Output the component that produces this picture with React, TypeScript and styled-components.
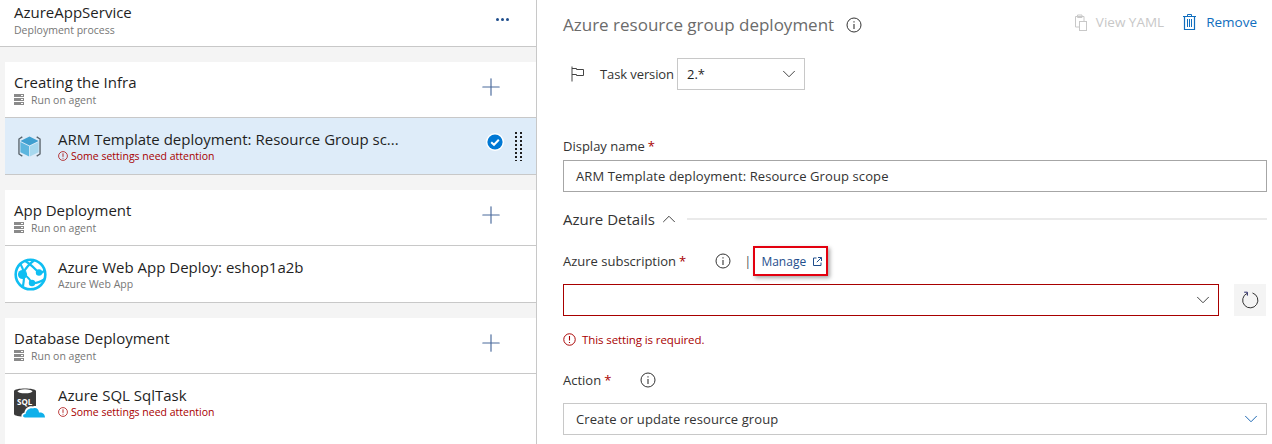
import styled, { createGlobalStyle } from 'styled-components';
import { ChevronDown, ChevronUp, Plus } from 'lucide-react';

const GlobalStyle = createGlobalStyle`
  html, body {
    margin: 0;
    padding: 0;
    background: #fff;
  }
  * {
    box-sizing: border-box;
  }
`;

const ServerIcon = () => (
  <svg width="10" height="12" viewBox="0 0 10 12">
    <rect width="10" height="3" y="0" fill="#8a8a8a" />
    <rect width="10" height="3" y="4" fill="#8a8a8a" />
    <rect width="10" height="3" y="8" fill="#8a8a8a" />
    <rect width="2" height="1" x="7" y="1" fill="#fff" />
    <rect width="2" height="1" x="7" y="5" fill="#fff" />
    <rect width="2" height="1" x="7" y="9" fill="#fff" />
  </svg>
);

const WarnIcon = ({ size = 10 }: { size?: number }) => (
  <svg width={size} height={size} viewBox="0 0 12 12" fill="none" stroke="#a80000">
    <circle cx="6" cy="6" r="5.3" strokeWidth="0.9" />
    <path d="M6 2.8V7M6 8.2V9.2" strokeWidth="1" />
  </svg>
);

const InfoIcon = () => (
  <svg width="16" height="16" viewBox="0 0 16 16" fill="none" stroke="#333">
    <circle cx="8" cy="8" r="7" strokeWidth="1" />
    <path d="M8 7V12M8 4.2V5.6" strokeWidth="1.1" />
  </svg>
);

const CubeIcon = () => (
  <svg width="25" height="23" viewBox="0 0 26 24" fill="none">
    <path d="M5.5 2L2 4.2V19.8L5.5 22" stroke="#59636b" strokeWidth="1.4" />
    <path d="M20.5 2L24 4.2V19.8L20.5 22" stroke="#59636b" strokeWidth="1.4" />
    <path d="M13 1.5L22.5 6.2L13 11L3.5 6.2Z" fill="#3e9fd0" />
    <path d="M3.5 7.2L12.6 11.8V22.5L3.5 18Z" fill="#5cb5de" />
    <path d="M22.5 7.2L13.4 11.8V22.5L22.5 18Z" fill="#a7d8ee" />
  </svg>
);

const WebAppIcon = () => (
  <svg width="33" height="33" viewBox="0 0 33 33" fill="none">
    <circle cx="16.5" cy="16.5" r="14.8" stroke="#0fbef2" strokeWidth="2.6" />
    <path
      d="M6 5C10 12 11 17 9 28M7 16C12 16 15 20 18 25C22 26 26 24 31 21M11 3C17 6 21 11 25 15C27 16 29 14 31 12M20 2.5C15 6 12 10 9 15"
      stroke="#0fbef2"
      strokeWidth="2.2"
    />
    <circle cx="8.5" cy="16.5" r="4.6" fill="#0fbef2" />
    <circle cx="25" cy="14.5" r="3.2" fill="#0fbef2" />
    <circle cx="18" cy="25" r="3.2" fill="#0fbef2" />
  </svg>
);

const SqlIcon = ({ labelled = true }: { labelled?: boolean }) => (
  <svg width="32" height="33" viewBox="0 0 32 33">
    <path d="M0 5C0 1.5 22 1.5 22 5V28C22 31.5 0 31.5 0 28Z" fill="#3b3b3b" />
    <ellipse cx="11" cy="5.3" rx="7.5" ry="2" fill="#fff" />
    {labelled && (
      <text x="3" y="19" fontFamily="'Open Sans', sans-serif" fontSize="8" fontWeight="700" fill="#fff">
        SQL
      </text>
    )}
    <path
      d="M10 32.5C6.5 32.5 6.5 27 10.5 26.5C11 22 15 19.5 19 20.5C22 19 26 21.5 26 25C30 25 32 28 32 32.5Z"
      fill="#fff"
    />
    <path
      d="M11 31.5C8.5 31.5 8.5 28 11.5 28C12 24 16 21.5 19 22.5C22 21 25 23.5 25 26.5C28.5 26.2 31 28 31 31.5Z"
      fill="#0fb0ea"
    />
  </svg>
);

const CheckBadge = () => (
  <svg width="18" height="18" viewBox="0 0 18 18">
    <circle cx="9" cy="9" r="9" fill="#fff" />
    <circle cx="9" cy="9" r="7.6" fill="#0078d4" />
    <path d="M5.2 9.2L8 11.8L12.8 6.8" stroke="#fff" strokeWidth="2" fill="none" />
  </svg>
);

const DragGrip = () => (
  <svg width="7" height="29" viewBox="0 0 7 29" fill="#1f1f1f">
    {[0, 1, 2, 3, 4, 5, 6, 7].map((row) => (
      <g key={row}>
        <rect x="0" y={row * 4} width="2" height="2" />
        <rect x="5" y={row * 4} width="2" height="2" />
      </g>
    ))}
  </svg>
);

const FlagIcon = () => (
  <svg width="14" height="16" viewBox="0 0 14 16" fill="none" stroke="#444">
    <path d="M1 0.5V15.5" strokeWidth="1" />
    <path d="M1 2.5H5.5V3.5H12.5V9.5H5.5V8.5H1" strokeWidth="1" />
  </svg>
);

const CopyIcon = () => (
  <svg width="16" height="17" viewBox="0 0 16 17" fill="none" stroke="#c8c8c8">
    <path d="M3.5 2.5H12V7M3.5 2.5V13H7" strokeWidth="1" />
    <path d="M5.5 1H10V3.5H5.5Z" strokeWidth="1" />
    <rect x="7.5" y="7.5" width="7" height="9" strokeWidth="1" />
  </svg>
);

const TrashIcon = () => (
  <svg width="13" height="16" viewBox="0 0 13 16" fill="none" stroke="#106ebe">
    <path d="M0 2.5H13M4.5 2.5V0.5H8.5V2.5" strokeWidth="1" />
    <path d="M1.5 2.5V15.5H11.5V2.5" strokeWidth="1.2" />
    <path d="M4.5 5V13M6.5 5V13M8.5 5V13" strokeWidth="1" />
  </svg>
);

const RefreshIcon = () => (
  <svg width="18" height="18" viewBox="0 0 18 18" fill="none" stroke="#333">
    <path d="M6 2.4A7.6 7.6 0 1 0 11.5 2" strokeWidth="1" />
    <path d="M3.2 1.2H6.4V4.6" strokeWidth="1" stroke="#2b2b6b" />
  </svg>
);

const ExternalIcon = () => (
  <svg width="9" height="9" viewBox="0 0 9 9" fill="none" stroke="#1f4e8c">
    <path d="M3.5 1H0.5V8.5H8V5.5" strokeWidth="1" />
    <path d="M5 0.5H8.5V4M8.3 0.7L3.8 5.2" strokeWidth="1" />
  </svg>
);

const Page = styled.div`
  display: flex;
  width: 1272px;
  height: 444px;
  overflow: hidden;
  background: #fff;
  color: #1f1f1f;
  font-family: 'Open Sans', 'Noto Sans', sans-serif;
`;

const LeftPanel = styled.div`
  flex: 0 0 537px;
  background: #f4f4f4;
  border-right: 1px solid #c8c8c8;
`;

const PipelineHeader = styled.header`
  display: flex;
  justify-content: space-between;
  align-items: flex-start;
  height: 47px;
  padding: 3px 27px 0 14px;
  margin-bottom: 15px;
  background: #fff;
  border-bottom: 1px solid #c8c8c8;
`;

const PipelineTitle = styled.div`
  font-size: 15px;
  line-height: 18px;
  margin-bottom: 2px;
`;

const Muted = styled.div`
  font-size: 10.5px;
  line-height: 14px;
  color: #767676;
`;

const MoreDots = styled.div`
  display: flex;
  gap: 2px;
  margin-top: 15px;

  span {
    width: 3px;
    height: 3px;
    border-radius: 50%;
    background: #1f4e8c;
  }
`;

const Phase = styled.section`
  margin: 0 0 15px 5px;
  background: #fff;
`;

const PhaseHead = styled.div`
  display: flex;
  justify-content: space-between;
  height: 56px;
  padding: 11px 31px 0 9px;
  border-bottom: 1px solid #c8c8c8;
`;

const PhaseTitle = styled.div`
  font-size: 15px;
  line-height: 18px;
`;

const AgentLine = styled(Muted)`
  display: flex;
  align-items: center;
  gap: 7px;
  margin-top: 2px;
`;

const AddButton = styled.div`
  display: flex;
  height: 28px;
  color: #4a6a9c;
`;

const Task = styled.div<{ $selected?: boolean; $last?: boolean }>`
  display: flex;
  align-items: center;
  height: 57px;
  padding: 0 14px 0 9px;
  background: ${(p) => (p.$selected ? '#deecf9' : '#fff')};
  border-bottom: ${(p) => (p.$last ? 'none' : '1px solid #c8c8c8')};
`;

const TaskIcon = styled.div<{ $inset?: number }>`
  display: flex;
  justify-content: flex-start;
  flex: 0 0 44px;
  padding-left: ${(p) => p.$inset ?? 0}px;
`;

const TaskBody = styled.div`
  flex: 1;
  min-width: 0;
`;

const TaskName = styled.div`
  font-size: 15px;
  line-height: 19px;
  white-space: nowrap;
`;

const Warning = styled.div`
  display: flex;
  align-items: center;
  gap: 3px;
  font-size: 10.5px;
  line-height: 14px;
  color: #a80000;
`;

const TaskActions = styled.div`
  display: flex;
  align-items: center;
  gap: 11px;

  > svg:first-child {
    margin-top: -8px;
  }
`;

const RightPanel = styled.main`
  flex: 1;
  padding: 0 5px 0 26px;
  min-width: 0;
`;

const TitleRow = styled.div`
  display: flex;
  align-items: center;
  height: 50px;
`;

const Title = styled.h1`
  margin: 0 12px 0 0;
  font-size: 17px;
  font-weight: 400;
  line-height: 24px;
  color: #6b6b6b;
`;

const TopActions = styled.div`
  display: flex;
  align-items: center;
  gap: 19px;
  margin: -6px 10px 0 auto;
`;

const TopAction = styled.div<{ $disabled?: boolean }>`
  display: flex;
  align-items: center;
  gap: ${(p) => (p.$disabled ? 8 : 10)}px;
  font-size: 13.5px;
  color: ${(p) => (p.$disabled ? '#c8c8c8' : '#106ebe')};
`;

const VersionRow = styled.div`
  display: flex;
  align-items: center;
  height: 32px;
  margin: 8px 0 48px 8px;
`;

const VersionLabel = styled.span`
  margin: 0 3px 0 15px;
  font-size: 13px;
  color: #333;
  letter-spacing: -0.1px;
  white-space: nowrap;
`;

const VersionSelect = styled.div`
  display: flex;
  align-items: center;
  justify-content: space-between;
  width: 128px;
  height: 32px;
  padding: 0 4px 0 9px;
  border: 1px solid #c8c8c8;
  font-size: 13px;
`;

const Label = styled.div`
  display: flex;
  align-items: center;
  height: 16px;
  font-size: 13px;
  color: #333;
  white-space: nowrap;
`;

const Required = styled.span`
  margin-left: 3px;
  color: #a80000;
`;

const Field = styled.div<{ $error?: boolean; $soft?: boolean; $width?: string }>`
  display: flex;
  align-items: center;
  justify-content: space-between;
  width: ${(p) => p.$width ?? '704px'};
  height: 32px;
  padding: 0 4px 0 12px;
  border: 1px solid ${(p) => (p.$error ? '#a80000' : p.$soft ? '#c8c8c8' : '#a6a6a6')};
  font-size: 13px;
  color: #333;
  letter-spacing: 0.1px;
`;

const DisplayBlock = styled.div`
  margin-bottom: 14px;

  ${Field} {
    margin-top: 6px;
  }
`;

const SectionHead = styled.div`
  display: flex;
  align-items: center;
  gap: 3px;
  height: 26px;
  font-size: 15px;
  color: #333;
`;

const SectionRule = styled.div`
  flex: 1;
  height: 2px;
  margin-left: 4px;
  background: #eaeaea;
`;

const SubscriptionLabel = styled(Label)`
  height: 30px;
  margin-top: 14px;
`;

const LabelInfo = styled.span`
  display: flex;
  margin-left: 29px;
`;

const Divider = styled.span`
  margin: 0 2px 0 13px;
  color: #555;
`;

const ManageLink = styled.span`
  position: relative;
  display: flex;
  align-items: center;
  gap: 7px;
  padding: 0 4px 0 6px;
  height: 30px;
  border: 2px solid #e3000f;
  box-shadow: 2px 2px 4px rgba(0, 0, 0, 0.35);
  font-size: 12px;
  color: #1f4e8c;
`;

const SubscriptionRow = styled.div`
  display: flex;
  align-items: center;
  gap: 15px;
  margin-top: 8px;
`;

const RefreshButton = styled.div`
  display: flex;
  align-items: center;
  justify-content: center;
  width: 32px;
  height: 32px;
  background: #f4f4f4;
`;

const FieldError = styled.div`
  display: flex;
  align-items: center;
  gap: 6px;
  margin-top: 15px;
  height: 16px;
  font-size: 11.5px;
  letter-spacing: -0.1px;
  color: #a80000;
`;

const ActionLabel = styled(Label)`
  margin-top: 25px;
  margin-bottom: 15px;
`;

const App = () => {
  return (
    <>
      <GlobalStyle />
      <Page>
        <LeftPanel>
          <PipelineHeader>
            <div>
              <PipelineTitle>AzureAppService</PipelineTitle>
              <Muted>Deployment process</Muted>
            </div>
            <MoreDots>
              <span />
              <span />
              <span />
            </MoreDots>
          </PipelineHeader>

          <Phase>
            <PhaseHead>
              <div>
                <PhaseTitle>Creating the Infra</PhaseTitle>
                <AgentLine>
                  <ServerIcon />
                  Run on agent
                </AgentLine>
              </div>
              <AddButton>
                <Plus size={28} strokeWidth={1} />
              </AddButton>
            </PhaseHead>
            <Task $selected>
              <TaskIcon $inset={3}>
                <CubeIcon />
              </TaskIcon>
              <TaskBody>
                <TaskName>ARM Template deployment: Resource Group sc...</TaskName>
                <Warning>
                  <WarnIcon />
                  Some settings need attention
                </Warning>
              </TaskBody>
              <TaskActions>
                <CheckBadge />
                <DragGrip />
              </TaskActions>
            </Task>
          </Phase>

          <Phase>
            <PhaseHead>
              <div>
                <PhaseTitle>App Deployment</PhaseTitle>
                <AgentLine>
                  <ServerIcon />
                  Run on agent
                </AgentLine>
              </div>
              <AddButton>
                <Plus size={28} strokeWidth={1} />
              </AddButton>
            </PhaseHead>
            <Task>
              <TaskIcon>
                <WebAppIcon />
              </TaskIcon>
              <TaskBody>
                <TaskName>Azure Web App Deploy: eshop1a2b</TaskName>
                <Muted>Azure Web App</Muted>
              </TaskBody>
            </Task>
          </Phase>

          <Phase>
            <PhaseHead>
              <div>
                <PhaseTitle>Database Deployment</PhaseTitle>
                <AgentLine>
                  <ServerIcon />
                  Run on agent
                </AgentLine>
              </div>
              <AddButton>
                <Plus size={28} strokeWidth={1} />
              </AddButton>
            </PhaseHead>
            <Task $last>
              <TaskIcon>
                <SqlIcon />
              </TaskIcon>
              <TaskBody>
                <TaskName>Azure SQL SqlTask</TaskName>
                <Warning>
                  <WarnIcon />
                  Some settings need attention
                </Warning>
              </TaskBody>
            </Task>
            <Task $last>
              <TaskIcon>
                <SqlIcon labelled={false} />
              </TaskIcon>
            </Task>
          </Phase>
        </LeftPanel>

        <RightPanel>
          <TitleRow>
            <Title>Azure resource group deployment</Title>
            <InfoIcon />
            <TopActions>
              <TopAction $disabled>
                <CopyIcon />
                View YAML
              </TopAction>
              <TopAction>
                <TrashIcon />
                Remove
              </TopAction>
            </TopActions>
          </TitleRow>

          <VersionRow>
            <FlagIcon />
            <VersionLabel>Task version</VersionLabel>
            <VersionSelect>
              2.*
              <ChevronDown size={22} strokeWidth={1} color="#333" />
            </VersionSelect>
          </VersionRow>

          <DisplayBlock>
            <Label>
              Display name<Required>*</Required>
            </Label>
            <Field>ARM Template deployment: Resource Group scope</Field>
          </DisplayBlock>

          <SectionHead>
            Azure Details
            <ChevronUp size={22} strokeWidth={1} color="#333" />
            <SectionRule />
          </SectionHead>

          <SubscriptionLabel>
            Azure subscription<Required>*</Required>
            <LabelInfo>
              <InfoIcon />
            </LabelInfo>
            <Divider>|</Divider>
            <ManageLink>
              Manage
              <ExternalIcon />
            </ManageLink>
          </SubscriptionLabel>

          <SubscriptionRow>
            <Field $error $width="656px">
              <span />
              <ChevronDown size={22} strokeWidth={1} color="#333" />
            </Field>
            <RefreshButton>
              <RefreshIcon />
            </RefreshButton>
          </SubscriptionRow>

          <FieldError>
            <WarnIcon size={13} />
            This setting is required.
          </FieldError>

          <ActionLabel>
            Action<Required>*</Required>
            <LabelInfo>
              <InfoIcon />
            </LabelInfo>
          </ActionLabel>

          <Field $soft>
            Create or update resource group
            <ChevronDown size={22} strokeWidth={1} color="#0b5cad" />
          </Field>
        </RightPanel>
      </Page>
    </>
  );
};

export default App;
